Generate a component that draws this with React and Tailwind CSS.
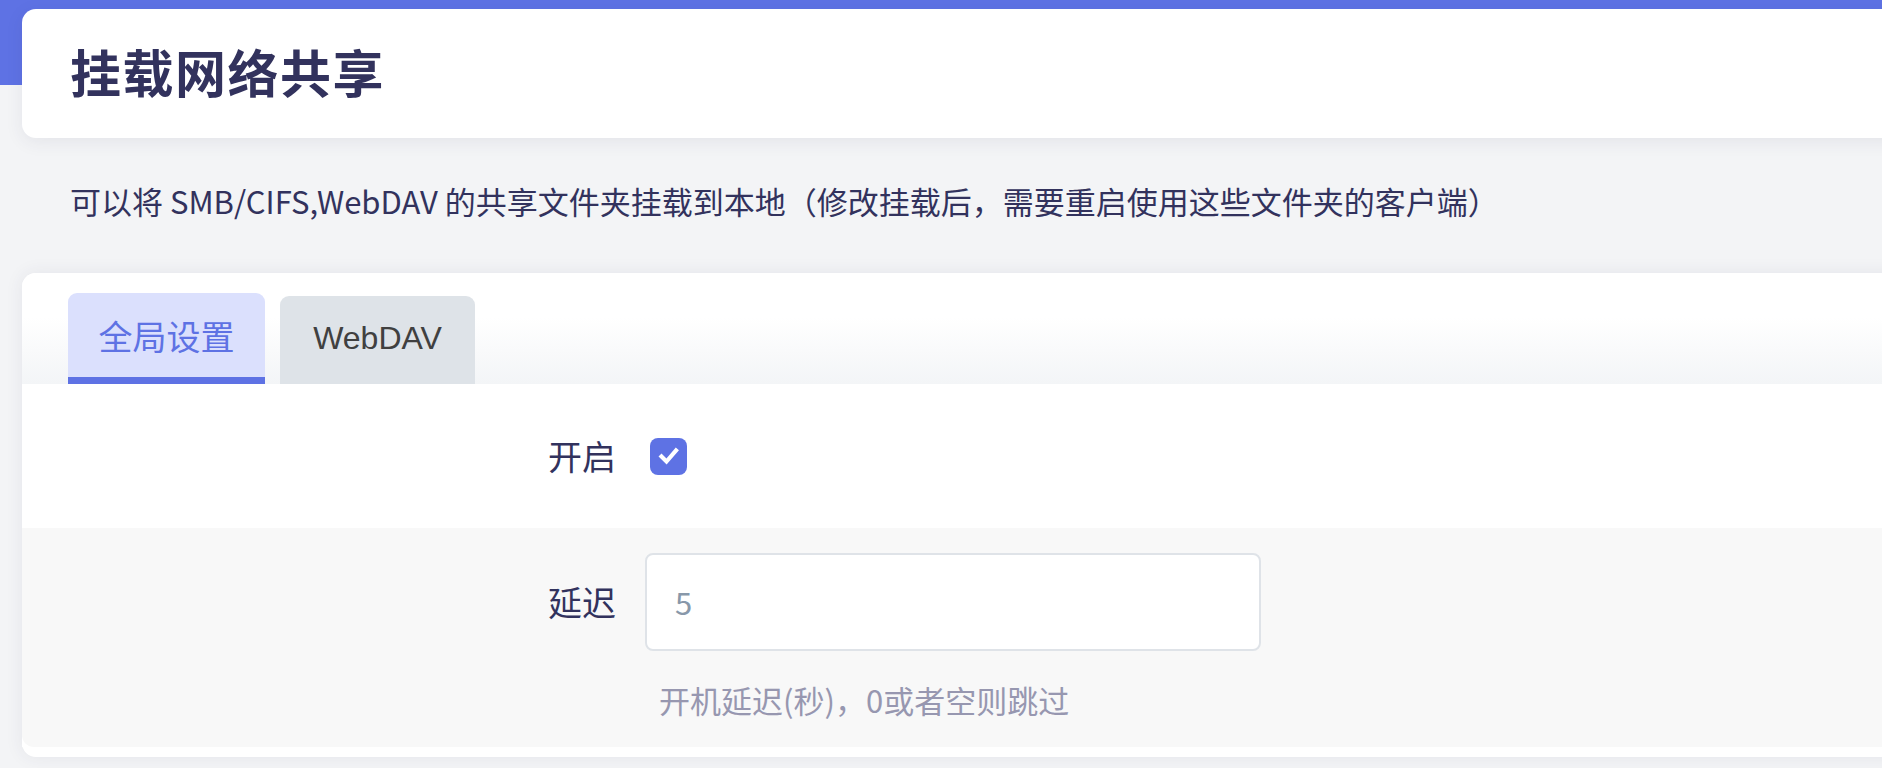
import React from "react";

const FONT = { fontFamily: '"Noto Sans CJK SC", "Noto Sans", sans-serif' };

function CheckBox() {
  return (
    <div className="ml-[5px] w-[37px] h-[37px] rounded-[8px] bg-[#5e72e4] flex items-center justify-center">
      <svg width="24" height="24" viewBox="0 0 24 24">
        <path d="M4.5 12.5 L9.5 17.5 L19 6.5" fill="none" stroke="#ffffff" strokeWidth="4.2" strokeLinecap="square" />
      </svg>
    </div>
  );
}

export default function App() {
  return (
    <div className="relative w-full h-[768px] overflow-hidden bg-[#f3f4f6] text-[#32325d]" style={FONT}>
      {/* blue header band */}
      <div className="absolute left-0 top-0 w-full h-[85px] bg-[#5e72e4]" />

      <div className="relative pl-[22px] pt-[9px] mr-[-30px]">
        {/* page title card */}
        <div className="h-[129px] bg-white rounded-[14px] shadow-[0_4px_18px_rgba(50,50,93,0.08)] flex items-center pl-[48px]">
          <h2 className="text-[51px] font-bold leading-none tracking-[1.5px] mt-[-4px]">挂载网络共享</h2>
        </div>

        {/* description */}
        <div className="h-[135px] flex items-center pl-[48px] text-[31px] leading-none pb-[10px]">
          可以将 SMB/CIFS,WebDAV 的共享文件夹挂载到本地（修改挂载后，需要重启使用这些文件夹的客户端）
        </div>

        {/* settings card */}
        <div className="bg-white rounded-[14px] shadow-[0_0_18px_rgba(50,50,93,0.08)] pb-[10px]">
          {/* tabs */}
          <div className="flex items-end gap-[15px] pl-[46px] pt-[20px] h-[111px] rounded-t-[14px] bg-gradient-to-b from-white from-40% to-[#f3f5f7]">
            <div className="h-[91px] w-[197px] rounded-t-[9px] bg-[#dbe0fd] border-b-[7px] border-[#5e72e4] flex items-center justify-center text-[34px] text-[#5e72e4]">
              全局设置
            </div>
            <div
              className="h-[88px] w-[195px] rounded-t-[9px] bg-[#dee3e8] flex items-center justify-center text-[32px] text-[#404040] pb-[4px]"
              style={{ fontFamily: '"Liberation Sans", Arial, sans-serif' }}
            >
              WebDAV
            </div>
          </div>

          {/* content */}
          <div className="rounded-t-[14px] bg-white">
            <div className="h-[144px] flex items-center">
              <div className="w-[594px] text-right text-[34px] leading-none">开启</div>
              <div className="ml-[29px]">
                <CheckBox />
              </div>
            </div>

            <div className="bg-[#f8f8f8] rounded-b-[12px] pt-[25px] pb-[27px] flex items-start">
              <div className="w-[594px] h-[98px] flex items-center justify-end text-[34px] leading-none">延迟</div>
              <div className="ml-[29px] flex flex-col">
                <div className="w-[616px] h-[98px] bg-white border-2 border-[#dfe3e8] rounded-[8px] flex items-center pl-[28px] text-[31px] text-[#8898aa]">
                  5
                </div>
                <div className="mt-[29px] pl-[14px] text-[31px] leading-[40px] text-[#9797b0]">
                  开机延迟(秒)，0或者空则跳过
                </div>
              </div>
            </div>
          </div>
        </div>
      </div>
    </div>
  );
}
